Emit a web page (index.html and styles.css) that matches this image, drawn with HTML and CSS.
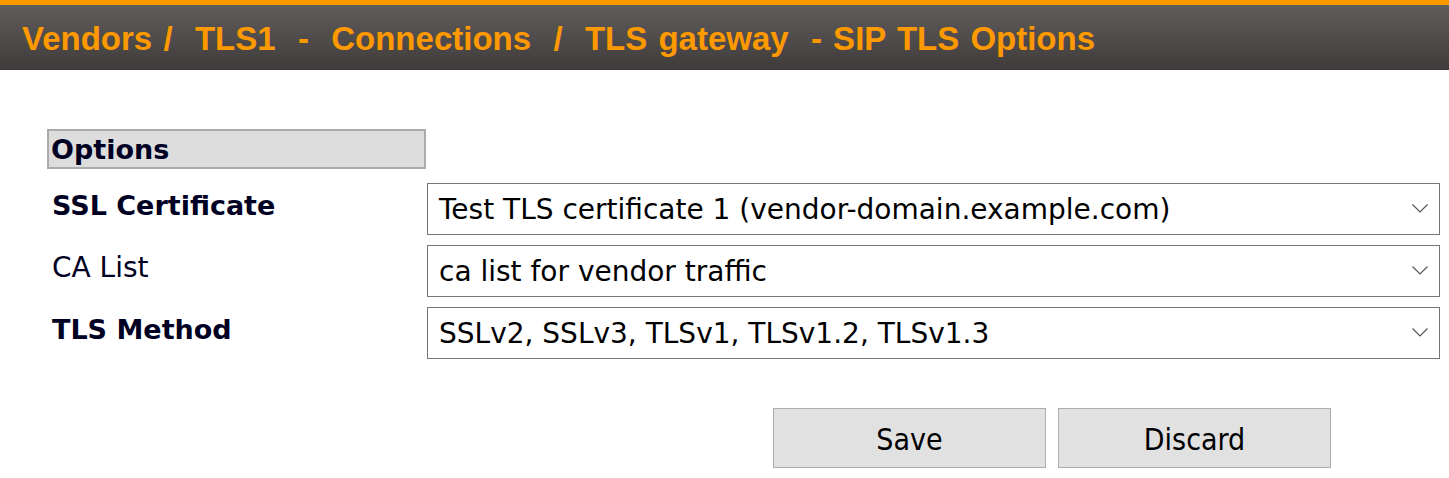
FILE: index.html
```html
<!DOCTYPE html>
<html>
<head>
<meta charset="utf-8">
<link rel="stylesheet" href="styles.css">
</head>
<body>
<header class="titlebar">
  <h1 class="crumbs">Vendors /  TLS1  -  Connections  /  TLS gateway  - SIP TLS Options</h1>
</header>
<main class="content">
  <div class="section-head">Options</div>
  <div class="form-grid">
    <label class="field-label strong">SSL Certificate</label>
    <div class="select"><span class="select-text">Test TLS certificate 1 (vendor-domain.example.com)</span>
      <svg class="chev" viewBox="0 0 16 10" width="16" height="10"><path d="M0.5 0.5 L8 8 L15.5 0.5" fill="none" stroke="#555" stroke-width="1.2"/></svg></div>
    <label class="field-label">CA List</label>
    <div class="select"><span class="select-text">ca list for vendor traffic</span>
      <svg class="chev" viewBox="0 0 16 10" width="16" height="10"><path d="M0.5 0.5 L8 8 L15.5 0.5" fill="none" stroke="#555" stroke-width="1.2"/></svg></div>
    <label class="field-label strong">TLS Method</label>
    <div class="select"><span class="select-text">SSLv2, SSLv3, TLSv1, TLSv1.2, TLSv1.3</span>
      <svg class="chev" viewBox="0 0 16 10" width="16" height="10"><path d="M0.5 0.5 L8 8 L15.5 0.5" fill="none" stroke="#555" stroke-width="1.2"/></svg></div>
  </div>
  <div class="actions">
    <button class="btn">Save</button>
    <button class="btn">Discard</button>
  </div>
</main>
</body>
</html>
```
FILE: styles.css
```css
html, body {
  margin: 0;
  padding: 0;
  background: #fff;
}
body {
  font-family: "DejaVu Sans", Verdana, sans-serif;
  color: #000;
}
.titlebar {
  border-top: 5px solid #ff9900;
  height: 65px;
  background: linear-gradient(#615d5c, #3f3b3b);
  display: flex;
  align-items: center;
  padding-left: 22px;
}
.crumbs {
  margin: 0;
  font-family: "Liberation Sans", Arial, sans-serif;
  font-weight: bold;
  font-size: 33px;
  word-spacing: 2px;
  color: #ff9900;
  white-space: pre;
  line-height: 1;
  padding-top: 1px;
}
.content {
  padding: 59px 9px 0 47px;
}
.section-head {
  box-sizing: border-box;
  width: 379px;
  height: 40px;
  background: #dddddd;
  border: 2px solid #aaaaaa;
  color: #000022;
  font-weight: bold;
  font-size: 27px;
  line-height: 38px;
  padding-left: 2px;
}
.form-grid {
  margin-top: 14px;
  display: grid;
  grid-template-columns: 380px 1013px;
  row-gap: 10px;
}
.field-label {
  font-size: 28px;
  color: #000022;
  padding-left: 5px;
  padding-top: 7px;
  line-height: 32px;
}
.field-label.strong {
  font-weight: bold;
  font-size: 27px;
}
.select {
  box-sizing: border-box;
  height: 52px;
  border: 1px solid #767676;
  display: flex;
  align-items: center;
  padding: 0 11px;
  font-size: 28px;
  color: #000;
}
.select-text {
  flex: 1;
  white-space: nowrap;
}
.actions {
  display: flex;
  gap: 12px;
  margin-top: 49px;
  padding-left: 726px;
}
.btn {
  box-sizing: border-box;
  width: 273px;
  height: 60px;
  background: #e1e1e1;
  border: 1px solid #adadad;
  font-family: "DejaVu Sans Condensed", "DejaVu Sans", sans-serif;
  font-size: 30px;
  color: #000;
  padding: 2px 0 0;
}
```
